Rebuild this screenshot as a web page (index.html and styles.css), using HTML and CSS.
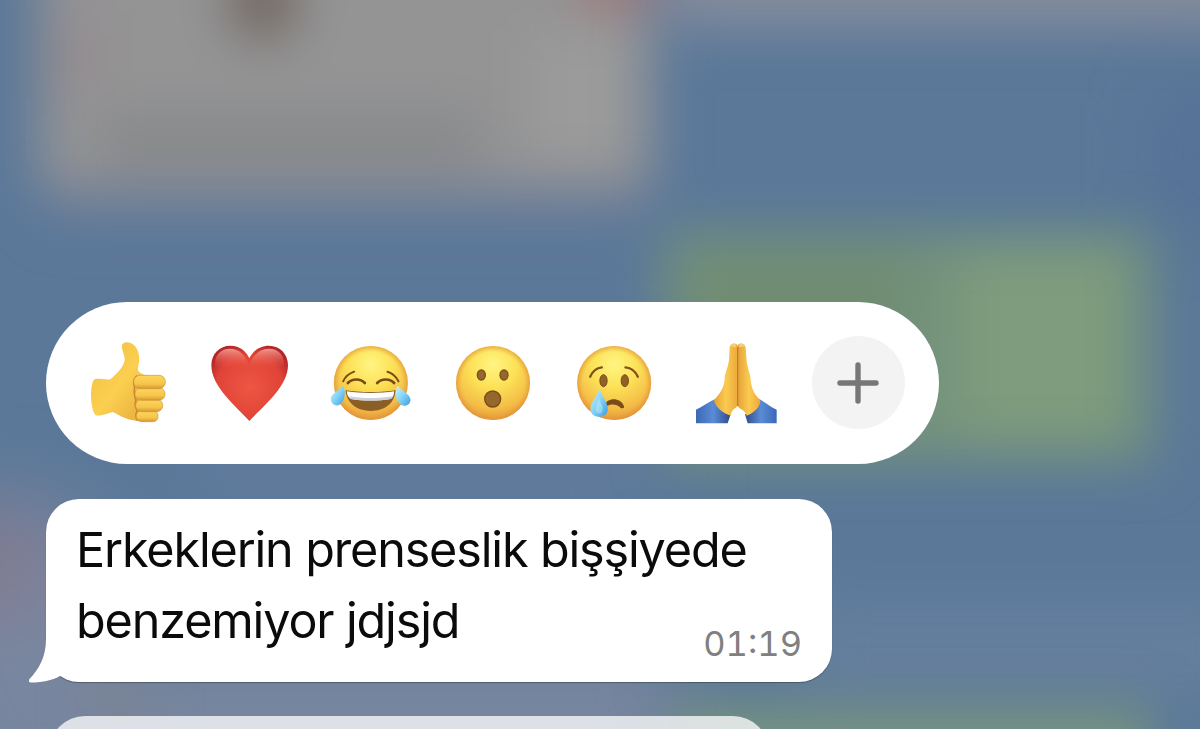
FILE: index.html
```
<!DOCTYPE html>
<html lang="tr">
<head>
  <meta charset="UTF-8" />
  <meta name="viewport" content="width=device-width, initial-scale=1.0" />
  <title>Mesaj</title>
  <link rel="stylesheet" href="styles.css">
</head>
<body>

  <!-- blurred chat behind the menu -->
  <svg class="backdrop" viewBox="0 0 1200 729" aria-hidden="true">
    <defs>
      <filter id="blur" x="-50%" y="-50%" width="200%" height="200%" color-interpolation-filters="sRGB"><feGaussianBlur stdDeviation="26" /></filter>
      <filter id="blurWide" x="-100%" y="-100%" width="300%" height="300%" color-interpolation-filters="sRGB"><feGaussianBlur stdDeviation="38" /></filter>
    </defs>
    <rect width="1200" height="729" fill="#5b7899" />
    <g filter="url(#blurWide)">
      <ellipse cx="0" cy="620" rx="130" ry="130" fill="#7b869f" />
      <rect x="-60" y="650" width="740" height="160" fill="#78869f" />
      <rect x="-60" y="520" width="95" height="80" fill="#83778c" />
      <rect x="200" y="440" width="460" height="60" fill="#647c9e" />
      <rect x="780" y="610" width="500" height="80" fill="#68809f" />
      <rect x="1170" y="100" width="80" height="110" fill="#527096" />
    </g>
    <g filter="url(#blur)">
      <rect x="50" y="180" width="590" height="38" fill="#6d7c98" />
      <rect x="670" y="-70" width="600" height="98" fill="#858c9c" />
      <rect x="38" y="-80" width="614" height="269" fill="#949495" />
      <rect x="100" y="115" width="380" height="52" fill="#86888a" />
      <rect x="530" y="30" width="100" height="130" fill="#9b9b9b" />
      <rect x="60" y="10" width="36" height="90" fill="#948b8e" />
      <rect x="664" y="232" width="488" height="231" fill="#74927c" />
      <rect x="690" y="255" width="220" height="80" fill="#708c72" />
      <rect x="960" y="250" width="165" height="185" fill="#7f9c7e" />
      <rect x="670" y="707" width="480" height="100" fill="#77947f" />
      <rect x="90" y="690" width="60" height="25" fill="#7a8187" />
      <ellipse cx="263" cy="-2" rx="33" ry="42" fill="#6d625b" />
      <ellipse cx="615" cy="-16" rx="40" ry="25" fill="#a07376" />
    </g>
  </svg>

  <div class="chat">
    <div class="reactions">
      <svg class="emoji" viewBox="10 0 300 315">
        <defs>
          <linearGradient id="hand" x1="0" y1="0" x2="1" y2="1">
            <stop offset="0" stop-color="#eebc43" />
            <stop offset=".5" stop-color="#fbcf50" />
            <stop offset="1" stop-color="#e3a638" />
          </linearGradient>
          <linearGradient id="finger" x1="0" y1="0" x2="0" y2="1">
            <stop offset="0" stop-color="#fdd75c" />
            <stop offset=".65" stop-color="#f6c548" />
            <stop offset="1" stop-color="#d59734" />
          </linearGradient>
        </defs>
        <path d="M57 150C67 142 91 151 107 148C124 134 146 113 150 91C152 75 137 56 143 43C151 32 171 37 181 48C196 66 196 93 190 111C187 127 200 133 219 137L237 270C210 276 172 274 153 265C137 260 125 249 114 246C99 249 80 261 62 255C47 235 45 171 57 150Z" fill="url(#hand)" />
        <path d="M188 137C177 143 174 158 180 172C178 183 179 202 184 209C180 222 183 235 188 241C181 253 183 266 190 272" fill="none" stroke="#c88932" stroke-width="5" />
        <g fill="url(#finger)" stroke="#cd9438" stroke-width="2">
          <rect x="185" y="242" width="65" height="33" rx="15" />
          <rect x="183" y="208" width="81" height="37" rx="18" />
          <rect x="181" y="173" width="90" height="38" rx="18" />
          <rect x="177" y="136" width="95" height="40" rx="19" />
        </g>
      </svg>

      <svg class="emoji" viewBox="0 0 300 315">
        <defs>
          <radialGradient id="heart" cx=".5" cy=".55" r=".6">
            <stop offset="0" stop-color="#ee5743" />
            <stop offset=".72" stop-color="#e04337" />
            <stop offset="1" stop-color="#b3272a" />
          </radialGradient>
          <linearGradient id="shine" x1="0" y1="0" x2="0" y2="1">
            <stop offset="0" stop-color="#f9aaa0" stop-opacity=".85" />
            <stop offset="1" stop-color="#ef5540" stop-opacity="0" />
          </linearGradient>
        </defs>
        <path d="M148 273C111 232 34 171 34 106C34 71 59 47 91 47C120 47 140 65 148 85C157 65 177 47 207 47C240 47 264 72 264 106C264 171 185 233 148 273Z" fill="url(#heart)" />
        <path d="M45 105C44 75 62 56 90 56C118 56 136 75 147 104C160 75 179 56 207 56C236 56 254 76 252 106C220 120 76 120 45 105Z" fill="url(#shine)" />
      </svg>

      <svg class="emoji" viewBox="4.5 0 300 315">
        <defs>
          <radialGradient id="face" cx=".5" cy=".25" r=".78">
            <stop offset="0" stop-color="#fff583" />
            <stop offset=".4" stop-color="#fce156" />
            <stop offset=".76" stop-color="#f4bd47" />
            <stop offset="1" stop-color="#e39238" />
          </radialGradient>
          <radialGradient id="edge">
            <stop offset=".84" stop-color="#e8a23d" stop-opacity="0" />
            <stop offset="1" stop-color="#df9036" stop-opacity=".65" />
          </radialGradient>
          <linearGradient id="tear" x1="0" y1="0" x2="1" y2="1">
            <stop offset="0" stop-color="#d2f4fb" />
            <stop offset=".5" stop-color="#83d3f7" />
            <stop offset="1" stop-color="#3a9de0" />
          </linearGradient>
        </defs>
        <circle cx="154" cy="159" r="111" fill="url(#face)" />
        <circle cx="154" cy="159" r="111" fill="url(#edge)" />
        <g fill="none" stroke="#7a4a16" stroke-linecap="round">
          <path d="M71 154C78 139 89 130 104 125M204 125C219 129 230 140 237 154" stroke-width="6" />
          <path d="M85 159C98 145 123 145 136 159M173 159C186 145 211 145 224 159" stroke-width="8" />
        </g>
        <path d="M78 181C119 188 190 188 228 181C226 221 195 243 154 243C112 243 82 220 78 181Z" fill="#8b5e25" />
        <path d="M82 184C125 191 187 190 224 184C224 196 219 205 213 207C177 213 131 213 94 207C87 204 82 195 82 184Z" fill="#fff" />
        <path d="M88 199C125 206 183 206 219 199L214 207C177 213 131 213 94 207Z" fill="#cad1d8" />
        <path d="M71 167C79 184 78 209 62 223C50 232 35 223 34 208C34 190 56 185 71 167Z" fill="url(#tear)" />
        <path d="M234 167C249 184 271 191 273 209C273 224 257 232 245 224C226 211 226 185 234 167Z" fill="url(#tear)" />
      </svg>

      <svg class="emoji" viewBox="9 0 300 315">
        <circle cx="159" cy="159" r="111" fill="url(#face)" />
        <circle cx="159" cy="159" r="111" fill="url(#edge)" />
        <g fill="#94672c" stroke="#7a4d19" stroke-width="4">
          <ellipse cx="124" cy="135" rx="12" ry="15" />
          <ellipse cx="192" cy="135" rx="12" ry="15" />
          <circle cx="158" cy="207" r="24" />
        </g>
      </svg>

      <svg class="emoji" viewBox="-1.5 0 300 315">
        <circle cx="149" cy="159" r="111" fill="url(#face)" />
        <circle cx="149" cy="159" r="111" fill="url(#edge)" />
        <g fill="#906027" stroke="#7a4d19" stroke-width="3">
          <ellipse cx="117" cy="152" rx="11" ry="18" />
          <ellipse cx="181" cy="152" rx="11" ry="18" />
        </g>
        <path d="M77 140C84 124 95 114 112 112M183 112C201 114 213 124 220 140" fill="none" stroke="#82501a" stroke-width="7" stroke-linecap="round" />
        <path d="M121 226C126 202 169 200 179 230C178 237 169 236 165 230C152 221 138 222 127 228Z" fill="#7c4c18" />
        <path d="M104 174C110 197 130 216 130 236C130 252 119 260 104 260C88 260 78 251 78 236C78 217 99 198 104 174Z" fill="url(#tear)" />
        <path d="M103 199C103 215 93 226 94 241C97 254 111 253 114 242C118 227 104 218 103 199Z" fill="#e3fcff" opacity=".35" />
      </svg>

      <svg class="emoji" viewBox="3 0 300 315">
        <defs>
          <linearGradient id="sleeve" x1="0" y1="0" x2="1" y2="0">
            <stop offset="0" stop-color="#3c68b5" />
            <stop offset=".5" stop-color="#5a8cd6" />
            <stop offset="1" stop-color="#304a87" />
          </linearGradient>
          <linearGradient id="sleeveRight" x1="1" y1="0" x2="0" y2="0">
            <stop offset="0" stop-color="#3c68b5" />
            <stop offset=".5" stop-color="#5a8cd6" />
            <stop offset="1" stop-color="#304a87" />
          </linearGradient>
          <linearGradient id="palm" x1="0" y1="0" x2="1" y2="0">
            <stop offset="0" stop-color="#e4a136" />
            <stop offset=".5" stop-color="#fbcb50" />
            <stop offset="1" stop-color="#eba83a" />
          </linearGradient>
        </defs>
        <path d="M33 239C54 229 73 215 91 207C98 231 115 246 137 253L128 280H33Z" fill="url(#sleeve)" />
        <path d="M275 239C256 230 240 216 222 207C216 231 200 246 180 253L188 280H275Z" fill="url(#sleeveRight)" />
        <path d="M134 52C136 39 151 37 158 46L158 228C151 235 139 239 137 257C114 250 89 230 87 210C109 188 117 169 119 148C118 132 128 117 132 91Z" fill="url(#palm)" />
        <path d="M158 46C165 37 180 40 182 53L185 94C188 118 197 134 197 151C200 175 206 192 226 210C226 232 208 248 185 257C181 240 165 239 158 228Z" fill="url(#palm)" />
        <path d="M158 51V228" stroke="#bd7a28" stroke-width="3.500" />
        <path d="M138 49Q142 37 153 44V52ZM162 44Q175 36 179 49L163 52Z" fill="#f4d079" />
      </svg>

      <button class="more" aria-label="Diğer">
        <svg viewBox="0 0 42 42"><path d="M21 3V39M3 21H39" /></svg>
      </button>
    </div>

    <div class="message">
      <svg class="tail" viewBox="0 0 60 60"><path d="M17 0V15C17 33 10 45 .5 55C-1 57 0 58.500 2 58.500C14 58.500 24 56 31 52L42 40V0Z" /></svg>
      <p class="text">Erkeklerin prenseslik bişşiyede<br>benzemiyor jdjsjd</p>
      <time class="time">01:19</time>
    </div>

    <div class="message-next"></div>
  </div>

</body>
</html>
```
FILE: styles.css
```
body {
  margin: 0;
  height: 729px;
  overflow: hidden;
  background-color: #5b7899;
  font-family: Inter, 'Liberation Sans', sans-serif;
}

.backdrop {
  position: absolute;
  top: 0;
  left: 0;
  width: 1200px;
  height: 729px;
}

.chat {
  position: relative;
  box-sizing: border-box;
  height: 729px;
  padding: 302px 0 0 46px;
  overflow: hidden;
}

.reactions {
  display: flex;
  align-items: center;
  gap: 21.5px;
  box-sizing: border-box;
  width: 893px;
  height: 162px;
  padding-left: 32.3px;
  padding-bottom: 1px;
  border-radius: 81px;
  background-color: #fff;
}

.emoji {
  flex: none;
  width: 100px;
  height: 105px;
}

.more {
  display: flex;
  align-items: center;
  justify-content: center;
  flex: none;
  width: 93px;
  height: 93px;
  margin-left: 4.5px;
  padding: 0;
  border: none;
  border-radius: 50%;
  background-color: #f3f3f3;
}

.more svg {
  width: 42px;
  height: 42px;
  fill: none;
  stroke: #777;
  stroke-width: 5.4;
  stroke-linecap: round;
}

.message {
  position: relative;
  box-sizing: border-box;
  width: 786px;
  height: 183px;
  margin-top: 35px;
  padding: 15px 30px;
  border-radius: 33px;
  background-color: #fff;
  box-shadow: 0 1px 1px rgba(0, 0, 0, 0.3);
}

/* hangs out of the lower left corner */
.tail {
  position: absolute;
  left: -17px;
  bottom: -1.5px;
  width: 60px;
  height: 60px;
  fill: #fff;
}

.text {
  position: relative;
  margin: 0;
  color: #0b0b0b;
  font-size: 48.5px;
  line-height: 71px;
  letter-spacing: -1.14px;
  white-space: nowrap;
}

.time {
  position: absolute;
  right: 30px;
  bottom: 16px;
  color: #808080;
  font-size: 34.5px;
  font-variant-numeric: tabular-nums;
  line-height: 44px;
}

.message-next {
  width: 720px;
  height: 80px;
  margin: 34px 0 0 3px;
  border-radius: 36px;
  background-color: rgba(255, 255, 255, 0.75);
}
```
